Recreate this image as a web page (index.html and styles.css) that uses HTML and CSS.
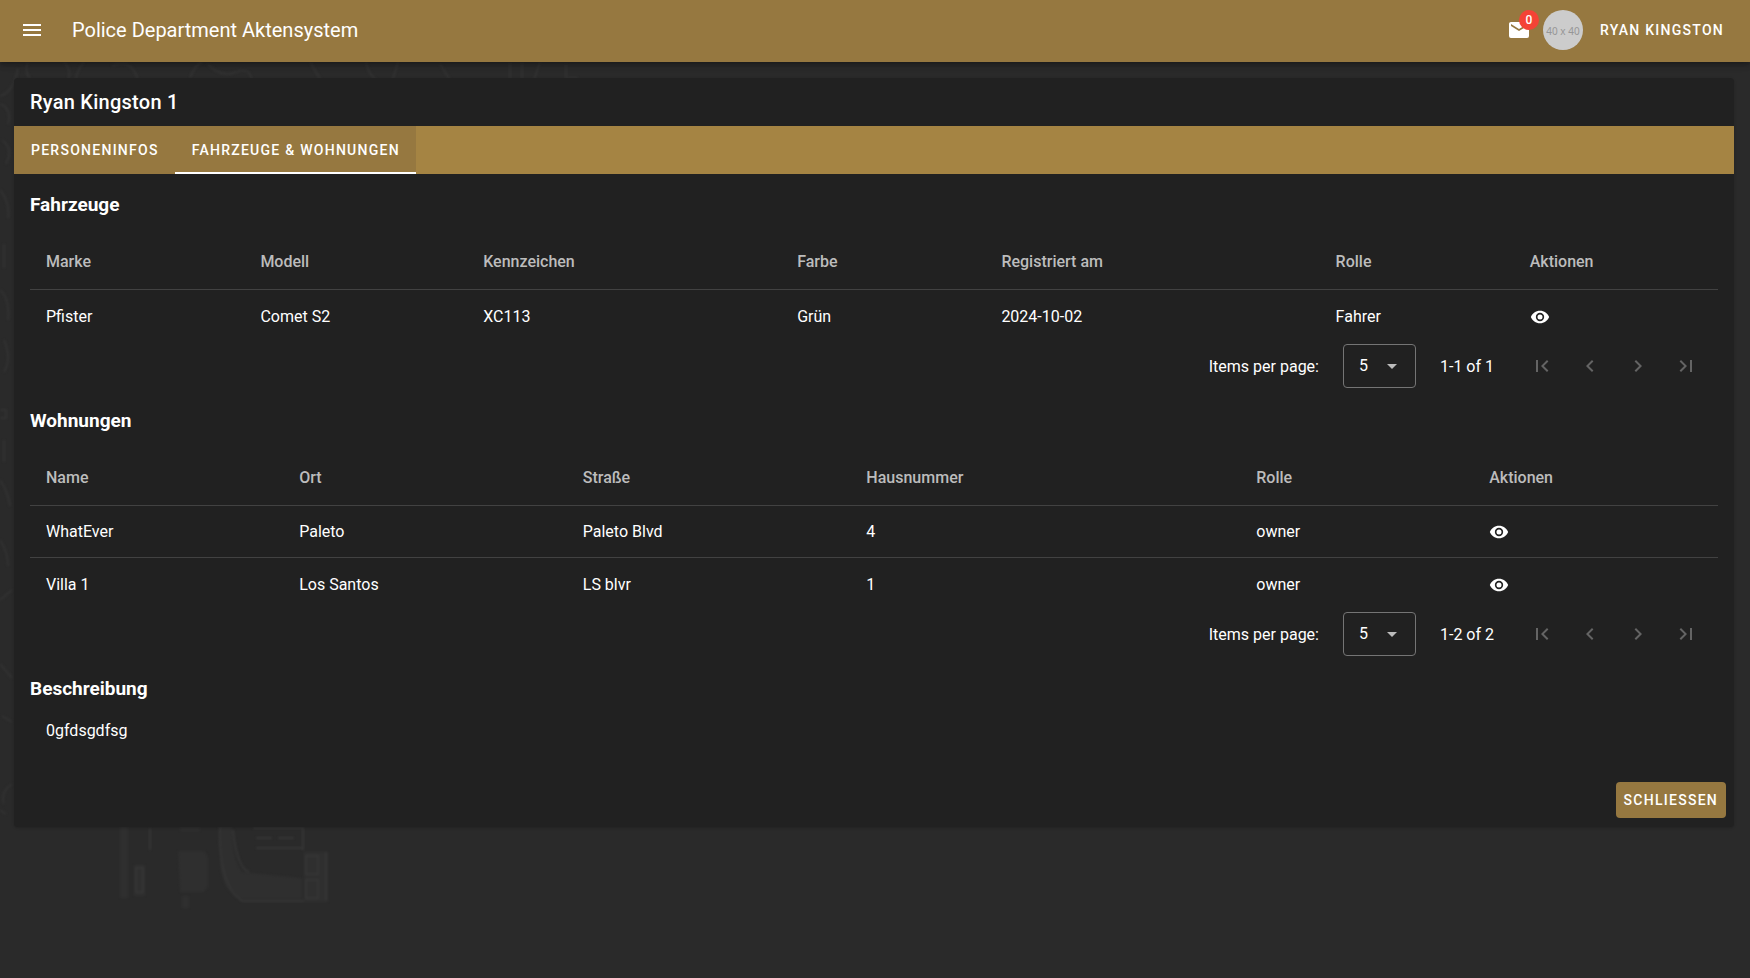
FILE: index.html
```html
<!DOCTYPE html>
<html lang="de">
<head>
<meta charset="utf-8">
<meta name="viewport" content="width=device-width, initial-scale=1">
<title>Police Department Aktensystem</title>
<link rel="stylesheet" href="styles.css">
</head>
<body>
<svg class="backdrop" aria-hidden="true" width="600" height="978" viewBox="0 0 600 978" fill="none">
  <g stroke="#323232" stroke-width="2">
    <path d="M0 96q14-4 18-28M28 62q-4 10 2 16M64 62q8 8 4 18M84 62q-8 10-8 18M112 66q20-8 26 14M190 78q4-12 12-16M208 64q12 14 28 8t16 12M310 62l12 20M366 62q2 12 12 20M398 62l-6 20M440 64l10 16M510 62v18M522 62v18M540 62l-6 18M566 64v14h12"/>
    <path d="M0 104q12 4 8 20M2 140q12 8 4 24M0 190q10 12 8 28M4 244v24M0 290q10 8 8 30M4 340q8 18 0 32M0 410h6v8H0M4 440v22M0 480q8 12 10 26M0 540q8 12 8 26M0 600l12-10M0 664l12 14M2 716l10 6M12 784q-12 8-8 20M0 810l6 4"/>
  </g>
  <g fill="#2f2f2f">
    <path d="M120 826h8v72h-8zM120 826h6v7h-6zM178 851h26l4 6v30l-4 5h-24zM182 896h7v12h-7zM134 865h11v31h-11zM180 827h20v4h-20z"/>
    <path d="M220 826h12q0 32 10 46l60 6v21h-60q-22-8-22-40z"/>
    <path d="M304 852h24v50h-24z"/>
  </g>
  <g stroke="#353535" stroke-width="2">
    <path d="M220 826q-2 46 14 68l8 7h62M233 830q4 38 16 42M253 828h50v22M256 838h16M278 838h16M256 848h46M326 852v48M306 856h12v18h-12zM306 880h12v18h-12zM136 868h7v24h-7zM150 828v22"/>
  </g>
</svg>

<header class="appbar">
  <button class="icon-button" type="button" aria-label="Menü">
    <svg class="icon" viewBox="0 0 24 24"><path d="M3,6H21V8H3V6M3,11H21V13H3V11M3,16H21V18H3V16Z"/></svg>
  </button>
  <h1 class="appbar-title">Police Department Aktensystem</h1>
  <button class="icon-button mail" type="button" aria-label="Nachrichten">
    <svg class="icon" viewBox="0 0 24 24"><path d="M20,8L12,13L4,8V6L12,11L20,6M20,4H4C2.89,4 2,4.89 2,6V18A2,2 0 0,0 4,20H20A2,2 0 0,0 22,18V6C22,4.89 21.1,4 20,4Z"/></svg>
    <span class="badge">0</span>
  </button>
  <span class="avatar">40 x 40</span>
  <button class="user-button" type="button">Ryan Kingston</button>
</header>

<main class="content">
  <article class="card">
    <h2 class="card-title">Ryan Kingston 1</h2>
    <div class="tabs" role="tablist">
      <button class="tab" type="button" role="tab" aria-selected="false">Personeninfos</button>
      <button class="tab" type="button" role="tab" aria-selected="true">Fahrzeuge &amp; Wohnungen</button>
    </div>

    <div class="card-text">
      <section>
        <h3 class="section-title">Fahrzeuge</h3>
        <table class="data-table vehicles">
          <thead>
            <tr><th>Marke</th><th>Modell</th><th>Kennzeichen</th><th>Farbe</th><th>Registriert am</th><th>Rolle</th><th>Aktionen</th></tr>
          </thead>
          <tbody>
            <tr><td>Pfister</td><td>Comet S2</td><td>XC113</td><td>Grün</td><td>2024-10-02</td><td>Fahrer</td><td><button class="view-button" type="button" aria-label="Ansehen"><svg class="icon-small" viewBox="0 0 24 24"><path d="M12,9A3,3 0 0,0 9,12A3,3 0 0,0 12,15A3,3 0 0,0 15,12A3,3 0 0,0 12,9M12,17A5,5 0 0,1 7,12A5,5 0 0,1 12,7A5,5 0 0,1 17,12A5,5 0 0,1 12,17M12,4.5C7,4.5 2.73,7.61 1,12C2.73,16.39 7,19.5 12,19.5C17,19.5 21.27,16.39 23,12C21.27,7.61 17,4.5 12,4.5Z"/></svg></button></td></tr>
          </tbody>
        </table>
        <div class="table-footer">
          <label for="vehicles-size">Items per page:</label>
          <div class="select">
            <select id="vehicles-size"><option>5</option><option>10</option><option>25</option></select>
            <svg class="select-arrow" viewBox="0 0 24 24"><path d="M7,10L12,15L17,10H7Z"/></svg>
          </div>
          <span class="range">1-1 of 1</span>
          <nav class="pager" aria-label="Fahrzeuge Seiten">
            <button type="button" disabled aria-label="Erste Seite"><svg class="icon" viewBox="0 0 24 24"><path d="M18.41,16.59L13.82,12L18.41,7.41L17,6L11,12L17,18L18.41,16.59M6,6H8V18H6V6Z"/></svg></button>
            <button type="button" disabled aria-label="Vorherige Seite"><svg class="icon" viewBox="0 0 24 24"><path d="M15.41,16.58L10.83,12L15.41,7.41L14,6L8,12L14,18L15.41,16.58Z"/></svg></button>
            <button type="button" disabled aria-label="Nächste Seite"><svg class="icon" viewBox="0 0 24 24"><path d="M8.59,16.58L13.17,12L8.59,7.41L10,6L16,12L10,18L8.59,16.58Z"/></svg></button>
            <button type="button" disabled aria-label="Letzte Seite"><svg class="icon" viewBox="0 0 24 24"><path d="M5.59,7.41L10.18,12L5.59,16.59L7,18L13,12L7,6L5.59,7.41M16,6H18V18H16V6Z"/></svg></button>
          </nav>
        </div>
      </section>

      <section>
        <h3 class="section-title">Wohnungen</h3>
        <table class="data-table homes">
          <thead>
            <tr><th>Name</th><th>Ort</th><th>Straße</th><th>Hausnummer</th><th>Rolle</th><th>Aktionen</th></tr>
          </thead>
          <tbody>
            <tr><td>WhatEver</td><td>Paleto</td><td>Paleto Blvd</td><td>4</td><td>owner</td><td><button class="view-button" type="button" aria-label="Ansehen"><svg class="icon-small" viewBox="0 0 24 24"><path d="M12,9A3,3 0 0,0 9,12A3,3 0 0,0 12,15A3,3 0 0,0 15,12A3,3 0 0,0 12,9M12,17A5,5 0 0,1 7,12A5,5 0 0,1 12,7A5,5 0 0,1 17,12A5,5 0 0,1 12,17M12,4.5C7,4.5 2.73,7.61 1,12C2.73,16.39 7,19.5 12,19.5C17,19.5 21.27,16.39 23,12C21.27,7.61 17,4.5 12,4.5Z"/></svg></button></td></tr>
            <tr><td>Villa 1</td><td>Los Santos</td><td>LS blvr</td><td>1</td><td>owner</td><td><button class="view-button" type="button" aria-label="Ansehen"><svg class="icon-small" viewBox="0 0 24 24"><path d="M12,9A3,3 0 0,0 9,12A3,3 0 0,0 12,15A3,3 0 0,0 15,12A3,3 0 0,0 12,9M12,17A5,5 0 0,1 7,12A5,5 0 0,1 12,7A5,5 0 0,1 17,12A5,5 0 0,1 12,17M12,4.5C7,4.5 2.73,7.61 1,12C2.73,16.39 7,19.5 12,19.5C17,19.5 21.27,16.39 23,12C21.27,7.61 17,4.5 12,4.5Z"/></svg></button></td></tr>
          </tbody>
        </table>
        <div class="table-footer">
          <label for="homes-size">Items per page:</label>
          <div class="select">
            <select id="homes-size"><option>5</option><option>10</option><option>25</option></select>
            <svg class="select-arrow" viewBox="0 0 24 24"><path d="M7,10L12,15L17,10H7Z"/></svg>
          </div>
          <span class="range">1-2 of 2</span>
          <nav class="pager" aria-label="Wohnungen Seiten">
            <button type="button" disabled aria-label="Erste Seite"><svg class="icon" viewBox="0 0 24 24"><path d="M18.41,16.59L13.82,12L18.41,7.41L17,6L11,12L17,18L18.41,16.59M6,6H8V18H6V6Z"/></svg></button>
            <button type="button" disabled aria-label="Vorherige Seite"><svg class="icon" viewBox="0 0 24 24"><path d="M15.41,16.58L10.83,12L15.41,7.41L14,6L8,12L14,18L15.41,16.58Z"/></svg></button>
            <button type="button" disabled aria-label="Nächste Seite"><svg class="icon" viewBox="0 0 24 24"><path d="M8.59,16.58L13.17,12L8.59,7.41L10,6L16,12L10,18L8.59,16.58Z"/></svg></button>
            <button type="button" disabled aria-label="Letzte Seite"><svg class="icon" viewBox="0 0 24 24"><path d="M5.59,7.41L10.18,12L5.59,16.59L7,18L13,12L7,6L5.59,7.41M16,6H18V18H16V6Z"/></svg></button>
          </nav>
        </div>
      </section>

      <section>
        <h3 class="section-title">Beschreibung</h3>
        <p class="description">0gfdsgdfsg</p>
      </section>
    </div>

    <footer class="card-actions">
      <button class="close-button" type="button">Schliessen</button>
    </footer>
  </article>
</main>
</body>
</html>
```

FILE: styles.css
```css
* {
  box-sizing: border-box;
}

body {
  margin: 0;
  min-height: 100vh;
  background: #2a2a2a;
  color: #fff;
  font: 400 16px/24px Roboto, "Liberation Sans", sans-serif;
}

button {
  margin: 0;
  padding: 0;
  border: 0;
  background: none;
  color: inherit;
  font: inherit;
}

h1,
h2,
h3,
p {
  margin: 0;
}

/* Faint map artwork behind the page */
.backdrop {
  position: absolute;
  top: 0;
  left: 0;
  z-index: -1;
  filter: blur(1px);
}

.icon,
.icon-small {
  display: block;
  width: 24px;
  height: 24px;
  fill: currentColor;
}

.icon-small {
  width: 20px;
  height: 20px;
}

.appbar {
  display: flex;
  align-items: center;
  height: 62px;
  padding: 0 26px 2px 20px;
  background: #967840;
  box-shadow: 0 2px 4px -1px rgba(0, 0, 0, 0.2), 0 4px 5px rgba(0, 0, 0, 0.14), 0 1px 10px rgba(0, 0, 0, 0.12);
}

.appbar-title {
  flex: 1;
  padding-left: 28px;
  font-size: 20px;
  font-weight: 400;
}

.mail {
  position: relative;
}

.badge {
  position: absolute;
  left: 12px;
  bottom: 12px;
  min-width: 20px;
  height: 20px;
  padding: 0 6px;
  border-radius: 10px;
  background: #f44336;
  font-size: 12px;
  font-weight: 500;
  line-height: 20px;
}

.avatar {
  display: grid;
  place-items: center;
  width: 40px;
  height: 40px;
  margin: 0 17px 0 12px;
  padding-top: 2px;
  border-radius: 50%;
  background: #ccc;
  color: #969696;
  font: 400 10px/12px "Noto Sans", sans-serif;
}

.user-button,
.tab,
.close-button {
  font-size: 14px;
  font-weight: 500;
  letter-spacing: 0.09em;
  text-transform: uppercase;
}

.content {
  padding: 16px 16px 16px 14px;
}

.card {
  border-radius: 4px;
  background: #212121;
  box-shadow: 0 1px 3px rgba(0, 0, 0, 0.2);
}

.card-title {
  padding: 12px 16px;
  font-size: 20px;
  font-weight: 500;
  letter-spacing: 0.0125em;
}

.tabs {
  display: flex;
  height: 48px;
  background: #a58443;
}

.tab {
  padding: 0 16px 0 17px;
  background: #967840;
}

.tab[aria-selected="true"] {
  box-shadow: inset 0 -2px #fff;
}

.card-text {
  padding: 0 16px 32px;
}

.section-title {
  padding: 19px 0 17px;
  font-size: 19px;
  font-weight: 700;
}

.data-table {
  width: 100%;
  table-layout: fixed;
  border-collapse: separate;
  border-spacing: 0;
}

.data-table th,
.data-table td {
  height: 52px;
  padding: 0 16px;
  text-align: left;
}

.data-table th {
  height: 56px;
  border-bottom: 1px solid #424242;
  color: #bcbcbc;
  font-weight: 500;
}

.data-table tbody tr:not(:last-child) td {
  border-bottom: 1px solid #424242;
}

.data-table tbody tr:last-child td {
  padding-top: 2px;
}

.vehicles th:nth-child(1) { width: 12.7%; }
.vehicles th:nth-child(2) { width: 13.2%; }
.vehicles th:nth-child(3) { width: 18.6%; }
.vehicles th:nth-child(4) { width: 12.1%; }
.vehicles th:nth-child(5) { width: 19.8%; }
.vehicles th:nth-child(6) { width: 11.5%; }

.homes th:nth-child(1) { width: 15%; }
.homes th:nth-child(2) { width: 16.8%; }
.homes th:nth-child(3) { width: 16.8%; }
.homes th:nth-child(4) { width: 23.1%; }
.homes th:nth-child(5) { width: 13.8%; }

.view-button {
  display: block;
}

.table-footer {
  display: flex;
  align-items: center;
  justify-content: flex-end;
  gap: 24px;
  padding-right: 8px;
}

.table-footer label,
.range {
  padding-top: 2px;
}

.select {
  position: relative;
  color: #bcbcbc;
}

.select select {
  display: block;
  appearance: none;
  width: 73px;
  height: 44px;
  padding: 0 15px;
  border: 1px solid #757575;
  border-radius: 4px;
  background: transparent;
  color: #fff;
  font: inherit;
}

.select-arrow {
  position: absolute;
  top: 10px;
  right: 12px;
  width: 24px;
  height: 24px;
  fill: currentColor;
  pointer-events: none;
}

.range {
  min-width: 54px;
}

.pager {
  display: flex;
}

.pager button {
  display: grid;
  place-items: center;
  width: 48px;
  height: 48px;
  color: #646464;
}

.description {
  padding: 1px 16px 0;
}

.card-actions {
  display: flex;
  justify-content: flex-end;
  padding: 7px 8px 9px;
}

.close-button {
  height: 36px;
  padding: 0 8px;
  border-radius: 4px;
  background: #967840;
}
```
